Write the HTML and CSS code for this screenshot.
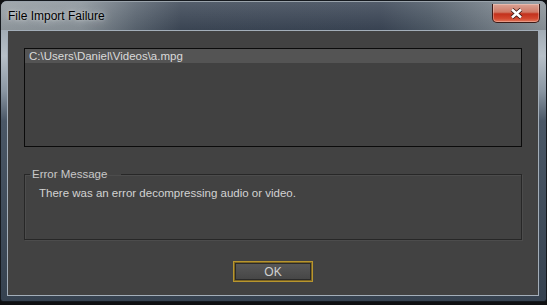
FILE: index.html
```html
<!DOCTYPE html>
<html lang="en">
  <head>
    <meta charset="UTF-8" />
    <title>File Import Failure</title>
    <link rel="stylesheet" href="styles.css">
  </head>
  <body>
    <div class="window">
      <div class="titlebar">
        <span class="title">File Import Failure</span>
        <button class="close" type="button">
          <svg width="13" height="11" viewBox="0 0 13 11">
            <path d="M2 1.5 L11 9.5 M11 1.5 L2 9.5" stroke="#3a1410" stroke-width="4.2" />
            <path d="M2 1.5 L11 9.5 M11 1.5 L2 9.5" stroke="#fff" stroke-width="2.6" />
          </svg>
        </button>
      </div>
      <div class="client">
        <div class="list">
          <div class="row selected">C:\Users\Daniel\Videos\a.mpg</div>
        </div>
        <fieldset class="group">
          <legend>Error Message</legend>
          <p>There was an error decompressing audio or video.</p>
        </fieldset>
        <div class="actions">
          <button class="ok" type="button">OK</button>
        </div>
      </div>
    </div>
  </body>
</html>
```

FILE: styles.css
```css
* {
  box-sizing: border-box;
}
html,
body {
  margin: 0;
  height: 100%;
  background-color: #0f1012;
  font-family: "Liberation Sans", Arial, sans-serif;
  font-size: 11.5px;
}
.window {
  width: 547px;
  height: 302px;
  border: 1px solid #15191e;
  border-radius: 7px 7px 3px 3px;
  display: flex;
  flex-direction: column;
  overflow: hidden;
  background: linear-gradient(to bottom, #8a959f 0, #b7c0c8 55px, #8a96a2 90px, #4a5766 120px, #364250 300px);
}
.titlebar {
  height: 29px;
  display: flex;
  align-items: flex-start;
  padding: 0 6px 0 7px;
  border-top: 1px solid #9aa3ab;
  background:
    linear-gradient(to bottom, rgba(255, 255, 255, 0.12), rgba(0, 0, 0, 0.05)),
    linear-gradient(to right, #959da3 0, #8a939a 80px, #5a6571 135px, #3d4857 180px, #3b4656 380px, #4e5a67 430px, #77818a 500px, #8d959b 547px);
}
.title {
  line-height: 28px;
  font-size: 12px;
  color: #000;
  text-shadow: 0 0 8px rgba(255, 255, 255, 0.7), 0 0 3px rgba(255, 255, 255, 0.5);
}
.close {
  margin: 2px 0 0 auto;
  width: 48px;
  height: 19px;
  padding: 0;
  border: 1px solid #3c1a16;
  border-top: 0;
  border-radius: 0 0 5px 5px;
  display: flex;
  align-items: center;
  justify-content: center;
  background: linear-gradient(to bottom, #dba395 0, #cf7a66 45%, #c3311c 55%, #d2472e 80%, #e0785c 100%);
  box-shadow: inset 0 0 0 1px rgba(255, 230, 220, 0.35);
}
.client {
  flex: 1;
  margin: 0 7px 5px 6px;
  border: 1px solid #a3aeb9;
  background-color: #424242;
  padding: 17px 16px 0 16px;
  display: flex;
  flex-direction: column;
  color: #d4d4d4;
}
.list {
  height: 99px;
  border: 1px solid #0b0b0b;
  background-color: #414141;
}
.list .row {
  height: 14px;
  line-height: 14px;
  padding-left: 4px;
  color: #dadada;
}
.list .row.selected {
  background-color: #545454;
}
.group {
  margin: 20px 0 0 0;
  padding: 0;
  height: 73px;
  border: 1px solid #272727;
  box-shadow: 1px 1px 0 #4c4c4c, inset 1px 1px 0 #4c4c4c;
  min-width: 0;
}
.group legend {
  margin-left: 5px;
  padding: 0 14px 0 2px;
  line-height: 14px;
  color: #c8c8c8;
}
.group p {
  margin: 5px 0 0 14px;
  line-height: 14px;
  color: #d2d2d2;
}
.actions {
  margin-top: 21px;
  display: flex;
  justify-content: center;
}
.ok {
  width: 80px;
  height: 21px;
  padding: 0;
  font-family: inherit;
  font-size: 12px;
  color: #d0d0d0;
  border: 1px solid #b8962f;
  box-shadow: inset 0 0 0 1px #7c6420, inset 0 0 0 2px #2a2a2a;
  background: linear-gradient(to bottom, #5a5a5a, #444444);
}
```
